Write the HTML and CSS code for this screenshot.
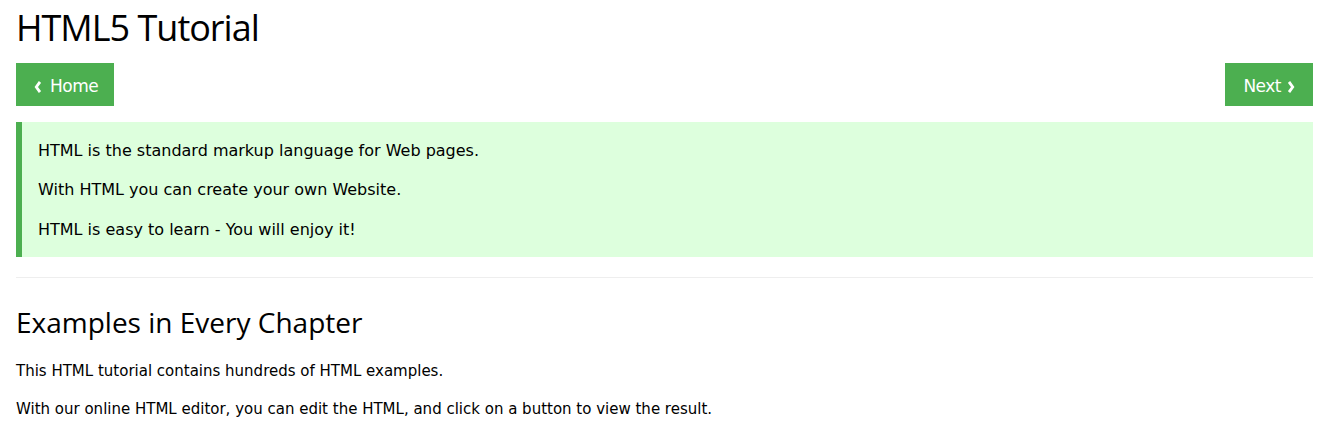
FILE: index.html
```html
<!DOCTYPE html>
<html lang="en">
<head>
<meta charset="utf-8">
<title>HTML5 Tutorial</title>
<link rel="stylesheet" href="styles.css">
</head>
<body>
<main class="main">
  <h1 class="title">HTML5 Tutorial</h1>
  <div class="nav">
    <a class="btn btn-prev" href="#"><svg class="chev" width="7" height="12" viewBox="0 0 7 12"><polyline points="6,0.9 2.3,6 6,11.1" fill="none" stroke="#fff" stroke-width="2.8"/></svg>Home</a>
    <a class="btn btn-next" href="#">Next<svg class="chev" width="7" height="12" viewBox="0 0 7 12"><polyline points="1,0.9 4.7,6 1,11.1" fill="none" stroke="#fff" stroke-width="2.8"/></svg></a>
  </div>
  <div class="panel">
    <p>HTML is the standard markup language for Web pages.</p>
    <p>With HTML you can create your own Website.</p>
    <p>HTML is easy to learn - You will enjoy it!</p>
  </div>
  <hr class="rule">
  <h2 class="subtitle">Examples in Every Chapter</h2>
  <p class="text">This HTML tutorial contains hundreds of HTML examples.</p>
  <p class="text">With our online HTML editor, you can edit the HTML, and click on a button to view the result.</p>
</main>
</body>
</html>
```
FILE: styles.css
```css
html, body {
  margin: 0;
  padding: 0;
  background: #fff;
  color: #000;
}
body {
  font-family: "DejaVu Sans", Verdana, sans-serif;
  font-size: 15px;
  line-height: 1.5;
  overflow: hidden;
}
.main {
  padding: 0 31px 0 16px;
}
.title {
  font-family: "Open Sans", "Noto Sans", sans-serif;
  font-weight: 400;
  font-size: 36px;
  letter-spacing: -1px;
  line-height: 50px;
  margin: 3px 0 10px;
}
.nav {
  display: flex;
  justify-content: space-between;
}
.btn {
  display: inline-flex;
  align-items: center;
  background: #4caf50;
  color: #fff;
  text-decoration: none;
  font-size: 17px;
  letter-spacing: -0.5px;
  line-height: 27px;
  height: 43px;
  box-sizing: border-box;
  padding: 10px 16px 6px 17.5px;
}
.btn-prev {
  gap: 9.5px;
}
.btn-next {
  gap: 7px;
  padding: 10px 18px 6px 18px;
}
.chev {
  display: block;
}
.panel {
  background: #ddffdd;
  border-left: 6px solid #4caf50;
  margin: 16px 0 20px;
  padding: 1px 16px 0;
  font-size: 16px;
  line-height: 24px;
  overflow: hidden;
}
.panel p {
  margin: 15.5px 0;
}
.rule {
  border: 0;
  border-top: 1px solid #eee;
  margin: 19px 0 20px;
}
.subtitle {
  font-family: "Open Sans", "Noto Sans", sans-serif;
  font-weight: 400;
  font-size: 28px;
  line-height: 40px;
  margin: 24px 0 18px;
}
.text {
  margin: 15px 0;
}
```
